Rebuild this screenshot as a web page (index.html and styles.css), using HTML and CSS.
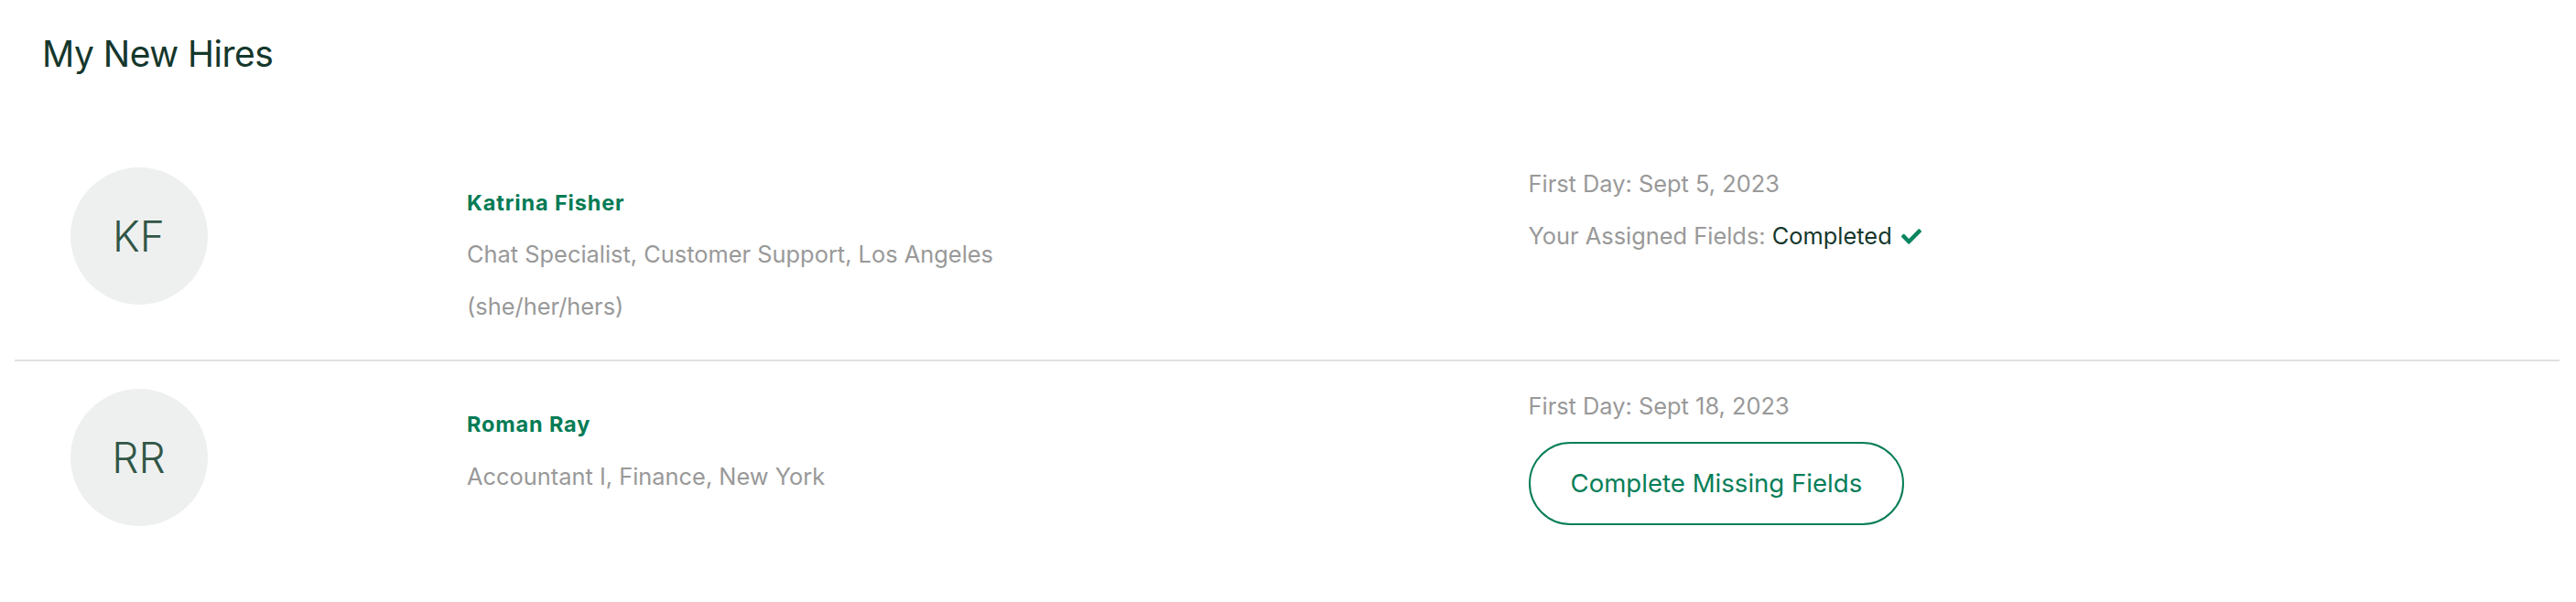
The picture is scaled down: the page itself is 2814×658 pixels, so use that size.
FILE: index.html
```html
<!DOCTYPE html>
<html lang="en">
<head>
<meta charset="utf-8">
<title>My New Hires</title>
<link rel="stylesheet" href="styles.css">
</head>
<body>
<main class="panel">
  <h1 class="panel-title">My New Hires</h1>
  <ul class="hire-list">
    <li class="hire-row">
      <div class="avatar"><span>KF</span></div>
      <div class="hire-info">
        <a class="hire-name" href="#">Katrina Fisher</a>
        <p class="meta">Chat Specialist, Customer Support, Los Angeles</p>
        <p class="meta">(she/her/hers)</p>
      </div>
      <div class="hire-status">
        <p class="meta">First Day: Sept 5, 2023</p>
        <p class="meta">Your Assigned Fields: <span class="done">Completed</span><svg class="check" viewBox="0 64 512 384" width="22" height="17" aria-hidden="true"><path d="M173.898 439.404l-166.4-166.4c-9.997-9.997-9.997-26.206 0-36.204l36.203-36.204c9.997-9.998 26.207-9.998 36.204 0L192 312.69 432.095 72.596c9.997-9.997 26.207-9.997 36.204 0l36.203 36.204c9.997 9.997 9.997 26.206 0 36.204l-294.4 294.401c-9.998 9.997-26.207 9.997-36.204-.001z"/></svg></p>
      </div>
    </li>
    <li class="hire-row">
      <div class="avatar"><span>RR</span></div>
      <div class="hire-info">
        <a class="hire-name" href="#">Roman Ray</a>
        <p class="meta">Accountant I, Finance, New York</p>
      </div>
      <div class="hire-status">
        <p class="meta">First Day: Sept 18, 2023</p>
        <button class="btn-outline" type="button">Complete Missing Fields</button>
      </div>
    </li>
  </ul>
</main>
</body>
</html>
```
FILE: styles.css
```css
* { box-sizing: border-box; }

html, body {
  margin: 0;
  padding: 0;
  background: #ffffff;
}

body {
  font-family: Inter, "Noto Sans", "Liberation Sans", sans-serif;
  color: #15372c;
}

.panel {
  padding: 36px 18px 0 16px;
}

.panel-title {
  margin: 0 0 70px 30px;
  font-size: 39px;
  font-weight: 400;
  line-height: 46.8px;
  letter-spacing: -0.5px;
  color: #15372c;
}

.hire-list {
  list-style: none;
  margin: 0;
  padding: 0;
}

.hire-row {
  display: grid;
  grid-template-columns: 433.5px 1159.5px 1fr;
  align-items: start;
  padding: 20px 0 30px 60.5px;
  border-bottom: 2px solid #e0e0e0;
}

.hire-row:last-child {
  border-bottom: none;
}

.avatar {
  width: 150px;
  height: 150px;
  margin-top: 10px;
  border-radius: 50%;
  background: #eef0ef;
  display: flex;
  align-items: center;
  justify-content: center;
}

.avatar span {
  font-size: 46px;
  font-weight: 300;
  line-height: normal;
  letter-spacing: 0;
  color: #315646;
}

.hire-info {
  margin-top: 21px;
  display: flex;
  flex-direction: column;
}

.hire-name {
  display: block;
  font-size: 23.5px;
  font-weight: 700;
  line-height: 56.5px;
  letter-spacing: 0.85px;
  color: #047b55;
  text-decoration: none;
}

.meta {
  margin: 0;
  font-size: 25.4px;
  line-height: 56.5px;
  color: #999999;
  white-space: nowrap;
}

.hire-status {
  margin-top: 0.5px;
}

.done {
  color: #15372c;
}

.check {
  fill: #0a8560;
  margin-left: 10px;
  vertical-align: baseline;
}

.btn-outline {
  display: block;
  margin-top: 11px;
  height: 91px;
  padding: 0 44px;
  border: 2px solid #077e58;
  border-radius: 46px;
  background: #ffffff;
  font-family: Inter, "Noto Sans", "Liberation Sans", sans-serif;
  font-size: 27.6px;
  line-height: 87px;
  color: #077e58;
  cursor: pointer;
}
```
